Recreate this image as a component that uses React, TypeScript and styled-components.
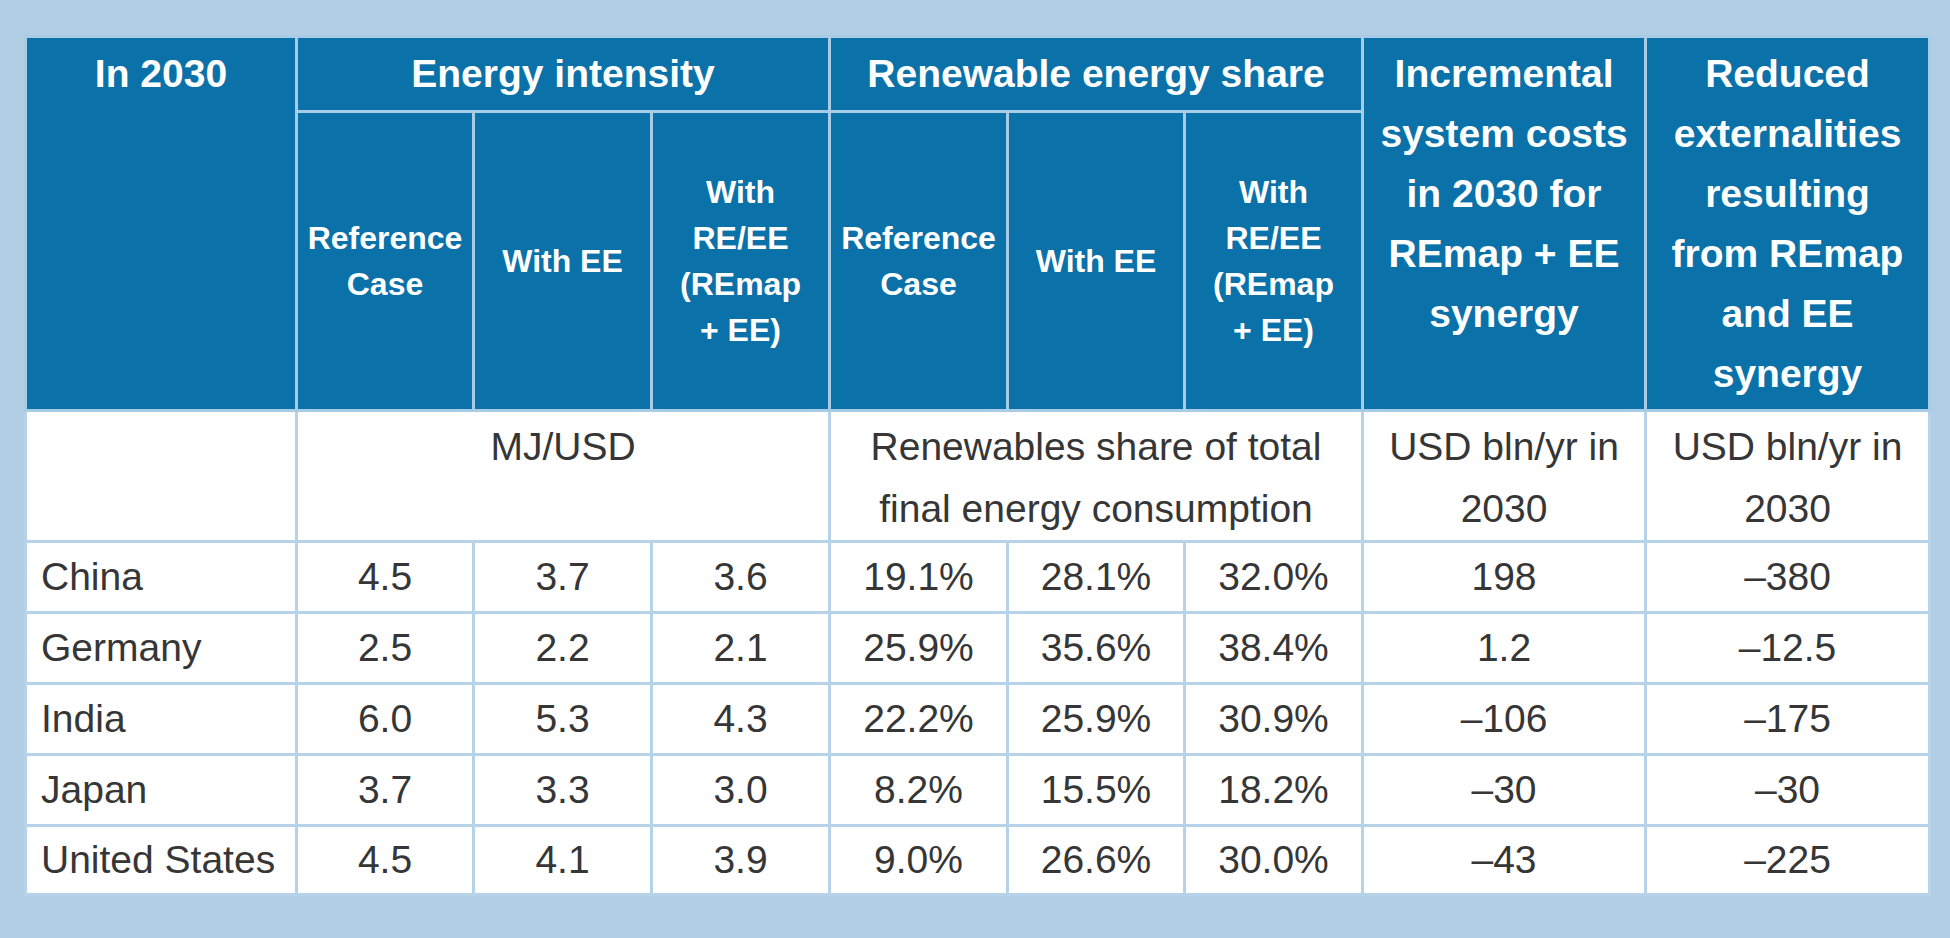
import React from 'react';
import styled, { createGlobalStyle } from 'styled-components';

const GlobalStyle = createGlobalStyle`
    html, body {
        margin: 0;
        padding: 0;
        background: #b2cee5;
    }
`;

interface DataRow {
    country: string;
    values: string[];
}

const rows: DataRow[] = [
    { country: 'China', values: ['4.5', '3.7', '3.6', '19.1%', '28.1%', '32.0%', '198', '–380'] },
    { country: 'Germany', values: ['2.5', '2.2', '2.1', '25.9%', '35.6%', '38.4%', '1.2', '–12.5'] },
    { country: 'India', values: ['6.0', '5.3', '4.3', '22.2%', '25.9%', '30.9%', '–106', '–175'] },
    { country: 'Japan', values: ['3.7', '3.3', '3.0', '8.2%', '15.5%', '18.2%', '–30', '–30'] },
    { country: 'United States', values: ['4.5', '4.1', '3.9', '9.0%', '26.6%', '30.0%', '–43', '–225'] },
];

const colWidths = [271, 177, 178, 178, 178, 177, 178, 283, 284];

const App: React.FC = () => {
    const renderHead = (
        <thead>
            <HeadRow $h={75}>
                <HeadCell rowSpan={2} $valign="top">
                    In 2030
                </HeadCell>
                <HeadCell colSpan={3}>Energy intensity</HeadCell>
                <HeadCell colSpan={3}>Renewable energy share</HeadCell>
                <HeadCell rowSpan={2} $valign="top">
                    Incremental
                    <br />
                    system costs
                    <br />
                    in 2030 for
                    <br />
                    REmap + EE
                    <br />
                    synergy
                </HeadCell>
                <HeadCell rowSpan={2} $valign="top">
                    Reduced
                    <br />
                    externalities
                    <br />
                    resulting
                    <br />
                    from REmap
                    <br />
                    and EE
                    <br />
                    synergy
                </HeadCell>
            </HeadRow>
            <HeadRow $h={299}>
                {[0, 1].map((g) => (
                    <React.Fragment key={g}>
                        <SubHeadCell>
                            Reference
                            <br />
                            Case
                        </SubHeadCell>
                        <SubHeadCell>With EE</SubHeadCell>
                        <SubHeadCell>
                            With
                            <br />
                            RE/EE
                            <br />
                            (REmap
                            <br />+ EE)
                        </SubHeadCell>
                    </React.Fragment>
                ))}
            </HeadRow>
        </thead>
    );

    const renderUnits = (
        <BodyRow $h={129}>
            <UnitCell />
            <UnitCell colSpan={3}>MJ/USD</UnitCell>
            <UnitCell colSpan={3}>
                Renewables share of total
                <br />
                final energy consumption
            </UnitCell>
            <UnitCell>
                USD bln/yr in
                <br />
                2030
            </UnitCell>
            <UnitCell>
                USD bln/yr in
                <br />
                2030
            </UnitCell>
        </BodyRow>
    );

    return (
        <>
            <GlobalStyle />
            <Page>
                <Table>
                    <colgroup>
                        {colWidths.map((w, i) => (
                            <col key={i} style={{ width: w }} />
                        ))}
                    </colgroup>
                    {renderHead}
                    <tbody>
                        {renderUnits}
                        {rows.map((r, idx) => (
                            <BodyRow key={r.country} $h={idx === rows.length - 1 ? 69 : 71}>
                                <DataCell $align="left">{r.country}</DataCell>
                                {r.values.map((v, i) => (
                                    <DataCell key={i}>{v}</DataCell>
                                ))}
                            </BodyRow>
                        ))}
                    </tbody>
                </Table>
            </Page>
        </>
    );
};

export default App;

const Page = styled.div`
    height: 100vh;
    box-sizing: border-box;
    overflow: hidden;
    padding: 35px 0 0 24px;
    font-family: 'Liberation Sans', Arial, sans-serif;
`;

const Table = styled.table`
    width: 1904px;
    table-layout: fixed;
    border-collapse: collapse;
    background: #ffffff;
`;

const HeadRow = styled.tr<{ $h: number }>`
    height: ${(p) => p.$h}px;
`;

const HeadCell = styled.th<{ $valign?: 'top' | 'middle' }>`
    background: #0b71a9;
    color: #ffffff;
    font-size: 39px;
    font-weight: 700;
    line-height: 60px;
    text-align: center;
    vertical-align: ${(p) => p.$valign || 'middle'};
    padding: ${(p) => (p.$valign === 'top' ? '6px 6px 0' : '0 6px')};
    border: 3px solid #a9cce6;
`;

const SubHeadCell = styled.th`
    background: #0b71a9;
    color: #ffffff;
    font-size: 32px;
    font-weight: 700;
    line-height: 46px;
    text-align: center;
    vertical-align: middle;
    padding: 0 3px;
    border: 3px solid #a9cce6;
`;

const BodyRow = styled.tr<{ $h: number }>`
    height: ${(p) => p.$h}px;
`;

const UnitCell = styled.td`
    color: #363636;
    font-size: 39px;
    line-height: 62px;
    text-align: center;
    vertical-align: top;
    padding: 4px 4px 0;
    border: 3px solid #b6d3ea;
`;

const DataCell = styled.td<{ $align?: 'left' | 'center' }>`
    color: #363636;
    font-size: 39px;
    line-height: 44px;
    text-align: ${(p) => p.$align || 'center'};
    vertical-align: middle;
    padding: ${(p) => (p.$align === 'left' ? '0 4px 0 14px' : '0 4px')};
    border: 3px solid #b6d3ea;
    white-space: nowrap;
`;
